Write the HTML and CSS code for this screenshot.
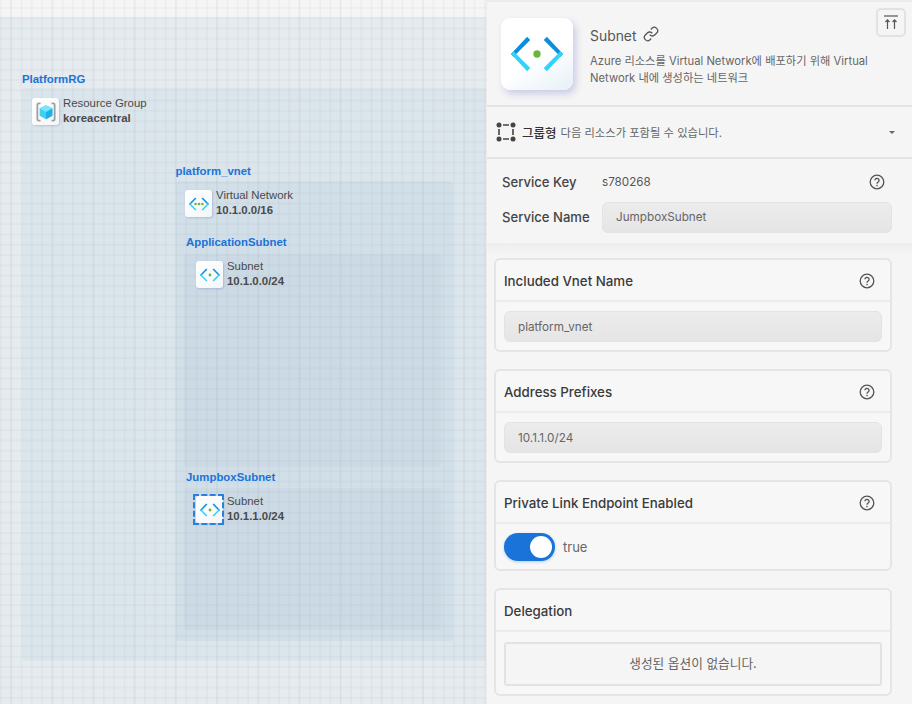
FILE: index.html
```html
<!DOCTYPE HTML>
<html>
    <head>
        <title>Subnet</title>
        <link rel="stylesheet" href="styles.css">
    </head>

    <body>
        <svg width="0" height="0" class="defs">
            <symbol id="subnet" viewBox="0 0 100 100">
                <path d="M31 17 L37 23 L10 50 L5 56 L0 50 Z" fill="#0a8fdc"/>
                <path d="M0 50 L5 44 L10 50 L37 77 L31 83 Z" fill="#2fd3fb"/>
                <path d="M69 17 L63 23 L90 50 L95 56 L100 50 Z" fill="#0a8fdc"/>
                <path d="M100 50 L95 44 L90 50 L63 77 L69 83 Z" fill="#2fd3fb"/>
                <circle cx="50" cy="50" r="7" fill="#6cb33f"/>
            </symbol>
            <symbol id="vnet" viewBox="0 0 100 100">
                <path d="M31 17 L37 23 L10 50 L5 56 L0 50 Z" fill="#0a8fdc"/>
                <path d="M0 50 L5 44 L10 50 L37 77 L31 83 Z" fill="#2fd3fb"/>
                <path d="M69 17 L63 23 L90 50 L95 56 L100 50 Z" fill="#0a8fdc"/>
                <path d="M100 50 L95 44 L90 50 L63 77 L69 83 Z" fill="#2fd3fb"/>
                <circle cx="33" cy="50" r="6.5" fill="#6cb33f"/>
                <circle cx="50" cy="50" r="6.5" fill="#6cb33f"/>
                <circle cx="67" cy="50" r="6.5" fill="#6cb33f"/>
            </symbol>
            <symbol id="help" viewBox="0 0 16 16">
                <circle cx="8" cy="8" r="6.8" fill="none" stroke="#555" stroke-width="1.3"/>
                <path d="M5.9 6.3a2.1 2 0 1 1 3.3 1.7c-.7.5-1.2.8-1.2 1.7" fill="none" stroke="#555" stroke-width="1.3"/>
                <circle cx="8" cy="11.6" r=".8" fill="#555"/>
            </symbol>
        </svg>

        <div class="canvas">
            <div class="box box-top"></div>
            <div class="box box-rg"></div>
            <div class="box box-vnet"></div>
            <div class="box box-app"></div>
            <div class="box box-jump"></div>

            <div class="group-label label-rg">PlatformRG</div>
            <div class="group-label label-vnet">platform_vnet</div>
            <div class="group-label label-app">ApplicationSubnet</div>
            <div class="group-label label-jump">JumpboxSubnet</div>

            <div class="node node-rg">
                <div class="node-icon">
                    <svg viewBox="0 0 22 22">
                        <path d="M5 1.5H3Q1.5 1.5 1.5 3V19Q1.5 20.5 3 20.5H5" fill="none" stroke="#a0a0a0" stroke-width="2"/>
                        <path d="M17 1.5H19Q20.5 1.5 20.5 3V19Q20.5 20.5 19 20.5H17" fill="none" stroke="#a0a0a0" stroke-width="2"/>
                        <path d="M11 3.5L18 7V15L11 19L4 15V7Z" fill="#3fd0f4"/>
                        <path d="M11 11L18 7V15L11 19Z" fill="#1fb0e6"/>
                        <path d="M11 3.5L18 7L11 11L4 7Z" fill="#7ae6fb"/>
                    </svg>
                </div>
                <div class="node-text">Resource Group<b>koreacentral</b></div>
            </div>

            <div class="node node-vnet">
                <div class="node-icon"><svg><use href="#vnet"/></svg></div>
                <div class="node-text">Virtual Network<b>10.1.0.0/16</b></div>
            </div>

            <div class="node node-app">
                <div class="node-icon"><svg><use href="#subnet"/></svg></div>
                <div class="node-text">Subnet<b>10.1.0.0/24</b></div>
            </div>

            <div class="node node-jump">
                <div class="node-icon selected"><svg><use href="#subnet"/></svg></div>
                <div class="node-text">Subnet<b>10.1.1.0/24</b></div>
            </div>
        </div>

        <div class="panel">
            <div class="panel-head">
                <div class="big-icon"><svg width="52" height="52"><use href="#subnet"/></svg></div>
                <div class="head-text">
                    <div class="head-title">
                        Subnet
                        <svg class="link-icon" width="16" height="16" viewBox="0 0 24 24" fill="none" stroke="#555" stroke-width="1.9">
                            <path d="M10 13a5 5 0 0 0 7.54.54l3-3a5 5 0 0 0-7.07-7.07l-1.72 1.71"/>
                            <path d="M14 11a5 5 0 0 0-7.54-.54l-3 3a5 5 0 0 0 7.07 7.07l1.71-1.71"/>
                        </svg>
                    </div>
                    <p class="head-desc">Azure 리소스를 Virtual Network에 배포하기 위해 Virtual Network 내에 생성하는 네트워크</p>
                </div>
                <button class="top-btn">
                    <svg width="16" height="15" viewBox="0 0 16 15" fill="none" stroke="#555" stroke-width="1.2">
                        <path d="M1 1H15"/>
                        <path d="M4.5 14V5M2.5 7L4.5 4.8L6.5 7"/>
                        <path d="M11.5 14V5M9.5 7L11.5 4.8L13.5 7"/>
                    </svg>
                </button>
            </div>

            <div class="type-row">
                <svg width="20" height="20" viewBox="0 0 20 20">
                    <path d="M7 3H13M3 7V13M17 7V13M7 17H13" stroke="#444" stroke-width="1.6"/>
                    <circle cx="3" cy="3" r="2.5" fill="#444"/>
                    <circle cx="17" cy="3" r="2.5" fill="#444"/>
                    <circle cx="3" cy="17" r="2.5" fill="#444"/>
                    <circle cx="17" cy="17" r="2.5" fill="#444"/>
                </svg>
                <b>그룹형</b>
                <span>다음 리소스가 포함될 수 있습니다.</span>
                <i class="caret"></i>
            </div>

            <div class="service">
                <div class="service-row">
                    <label>Service Key</label>
                    <span class="service-key">s780268</span>
                    <svg class="help" width="16" height="16"><use href="#help"/></svg>
                </div>
                <div class="service-row">
                    <label class="name-label">Service Name</label>
                    <div class="field">JumpboxSubnet</div>
                </div>
            </div>

            <div class="cards">
                <div class="card">
                    <div class="card-head">Included Vnet Name <svg class="help" width="16" height="16"><use href="#help"/></svg></div>
                    <div class="card-body"><div class="field">platform_vnet</div></div>
                </div>
                <div class="card">
                    <div class="card-head">Address Prefixes <svg class="help" width="16" height="16"><use href="#help"/></svg></div>
                    <div class="card-body"><div class="field">10.1.1.0/24</div></div>
                </div>
                <div class="card">
                    <div class="card-head">Private Link Endpoint Enabled <svg class="help" width="16" height="16"><use href="#help"/></svg></div>
                    <div class="toggle-row">
                        <div class="toggle"><i></i></div>
                        <span>true</span>
                    </div>
                </div>
                <div class="card">
                    <div class="card-head">Delegation</div>
                    <div class="card-body"><div class="empty">생성된 옵션이 없습니다.</div></div>
                </div>
            </div>
        </div>
    </body>
</html>
```

FILE: styles.css
```css
* {
    box-sizing: border-box;
}
body {
    margin: 0;
    display: flex;
    height: 704px;
    overflow: hidden;
    font-family: Inter, "Noto Sans CJK KR", sans-serif;
    color: #333;
    background: #f5f5f5;
}
.defs {
    position: absolute;
}

/* diagram */
.canvas {
    position: relative;
    width: 486px;
    height: 704px;
    overflow: hidden;
    background-color: #f5f5f5;
}
.canvas::after {
    content: "";
    position: absolute;
    inset: 0;
    background-image:
        linear-gradient(to right, rgba(150, 150, 150, 0.05) 2px, transparent 2px),
        linear-gradient(to bottom, rgba(150, 150, 150, 0.07) 2px, transparent 2px),
        linear-gradient(to right, rgba(150, 150, 150, 0.07) 2px, transparent 2px);
    background-size: 41.2px 100%, 100% 10.3px, 10.3px 100%;
    background-position: 10px 0, 0 7px, 0 0;
}
.box {
    position: absolute;
    border-radius: 4px;
}
.box-top {
    left: -10px;
    top: 17px;
    width: 520px;
    height: 700px;
    background: #e5ebef;
}
.box-rg {
    left: 22px;
    top: 88px;
    width: 480px;
    height: 573px;
    background: #dbe5ec;
}
.box-vnet {
    left: 176px;
    top: 181px;
    width: 277px;
    height: 460px;
    background: #d1dfe9;
}
.box-app {
    left: 184px;
    top: 254px;
    width: 257px;
    height: 213px;
    background: #cbdae5;
}
.box-jump {
    left: 184px;
    top: 488px;
    width: 257px;
    height: 142px;
    background: #cbdae5;
}
.group-label {
    position: absolute;
    z-index: 2;
    font: bold 11.4px "Liberation Sans", sans-serif;
    color: #1a73d9;
    line-height: 14px;
}
.label-rg { left: 22px; top: 72px; }
.label-vnet { left: 175.5px; top: 164px; }
.label-app { left: 186px; top: 235px; }
.label-jump { left: 186px; top: 470px; }
.node {
    position: absolute;
    z-index: 2;
    display: flex;
    gap: 4px;
}
.node-rg { left: 32px; top: 98px; }
.node-vnet { left: 185px; top: 190px; }
.node-app { left: 196px; top: 261px; }
.node-jump { left: 196px; top: 496px; }
.node-icon {
    position: relative;
    display: flex;
    align-items: center;
    justify-content: center;
    width: 27px;
    height: 27px;
    background: linear-gradient(135deg, #fff, #f3f6f9);
    border-radius: 3px;
    box-shadow: 1px 1px 2px rgba(100, 110, 170, 0.3);
}
.node-icon svg {
    width: 20px;
    height: 20px;
}
.selected::after {
    content: "";
    position: absolute;
    top: -2px;
    left: -3px;
    right: -1px;
    bottom: -2px;
    border: 2px dashed #2a7fdf;
}
.node-text {
    margin-top: -2px;
    font: 11.4px/15px "Liberation Sans", sans-serif;
    color: #4a4a4a;
}
.node-text b {
    display: block;
    color: #4a4a4a;
}

/* side panel */
.panel {
    width: 426px;
    height: 704px;
    flex: none;
    background: #f5f5f5;
    border-top: 2px solid #ebebeb;
    border-left: 1px solid #ececec;
}
.panel-head {
    position: relative;
    display: flex;
    height: 105px;
    padding: 16px 0 0 14px;
    gap: 17px;
    border-bottom: 2px solid #e4e4e4;
}
.big-icon {
    flex: none;
    display: flex;
    align-items: center;
    justify-content: center;
    width: 72px;
    height: 72px;
    background: linear-gradient(150deg, #fff 55%, #e6f0f7);
    border-radius: 9px;
    box-shadow: 3px 4px 7px rgba(110, 110, 200, 0.3);
}
.head-text {
    width: 282px;
}
.head-title {
    display: flex;
    align-items: center;
    gap: 7px;
    margin-top: 6px;
    font-size: 13.9px;
    line-height: 24px;
    color: #555;
}
.link-icon {
    margin-top: -4px;
}
.head-desc {
    margin: 5px 0 0;
    font-size: 11.25px;
    line-height: 17px;
    color: #666;
}
.top-btn {
    position: absolute;
    right: 6px;
    top: 6px;
    display: flex;
    align-items: center;
    justify-content: center;
    width: 30px;
    height: 29px;
    padding: 0;
    background: #f5f5f5;
    border: 2px solid #e2e2e2;
    border-radius: 5px;
}
.type-row {
    display: flex;
    align-items: center;
    height: 52px;
    padding: 0 17px 0 9px;
    border-bottom: 2px solid #e4e4e4;
    font-size: 11.3px;
    color: #666;
}
.type-row b {
    margin: 0 4px 0 6px;
    font-size: 12.5px;
    font-weight: 500;
    color: #333;
}
.caret {
    margin-left: auto;
    border: 3px solid transparent;
    border-top: 3px solid #666;
    border-bottom: 0;
}
.service {
    height: 84px;
    padding: 7px 20px 0 15px;
    font-size: 13.1px;
    color: #444;
}
.service-row {
    display: flex;
    align-items: center;
    height: 31px;
    margin-bottom: 5px;
}
.service-row label {
    width: 100px;
    flex: none;
    font-weight: 500;
}
.service-row .name-label {
    padding-bottom: 2px;
}
.service-key {
    font-size: 11.7px;
    color: #555;
}
.service-row .help {
    margin-left: auto;
    margin-right: 7px;
}
.field {
    flex: 1;
    height: 31px;
    padding: 0 13px;
    line-height: 29px;
    font-size: 11.7px;
    color: #666;
    background: linear-gradient(to bottom, #ececec, #e5e5e5);
    border: 1px solid #e3e3e3;
    border-radius: 6px;
}
.cards {
    display: flex;
    flex-direction: column;
    gap: 17px;
    padding: 15px 20px 0 7px;
    background: linear-gradient(to bottom, #eeeeee, #f5f5f5 12px);
}
.card {
    width: 398px;
    background: #f7f7f7;
    border: 2px solid #e5e5e5;
    border-radius: 6px;
}
.card-head {
    display: flex;
    align-items: center;
    justify-content: space-between;
    height: 42px;
    padding: 2px 15px 0 8px;
    font-size: 13.3px;
    font-weight: 500;
    color: #3a3a3a;
    border-bottom: 2px solid #ececec;
}
.card-body {
    padding: 9px 8px 8px;
}
.card-body .field {
    line-height: 30px;
}
.toggle-row {
    display: flex;
    align-items: center;
    gap: 8px;
    padding: 1px 8px 0;
    height: 45px;
    font-size: 13px;
    color: #666;
}
.toggle {
    position: relative;
    width: 51px;
    height: 28px;
    background: #1a73d9;
    border-radius: 14px;
    box-shadow: 0 1px 3px rgba(26, 115, 217, 0.3);
}
.toggle i {
    position: absolute;
    right: 3px;
    top: 3px;
    width: 22px;
    height: 22px;
    background: #fff;
    border-radius: 50%;
}
.empty {
    height: 44px;
    margin-top: 1px;
    line-height: 40px;
    text-align: center;
    font-size: 12.7px;
    color: #666;
    background: #f5f5f5;
    border: 2px solid #e2e2e2;
    border-radius: 3px;
}
```
